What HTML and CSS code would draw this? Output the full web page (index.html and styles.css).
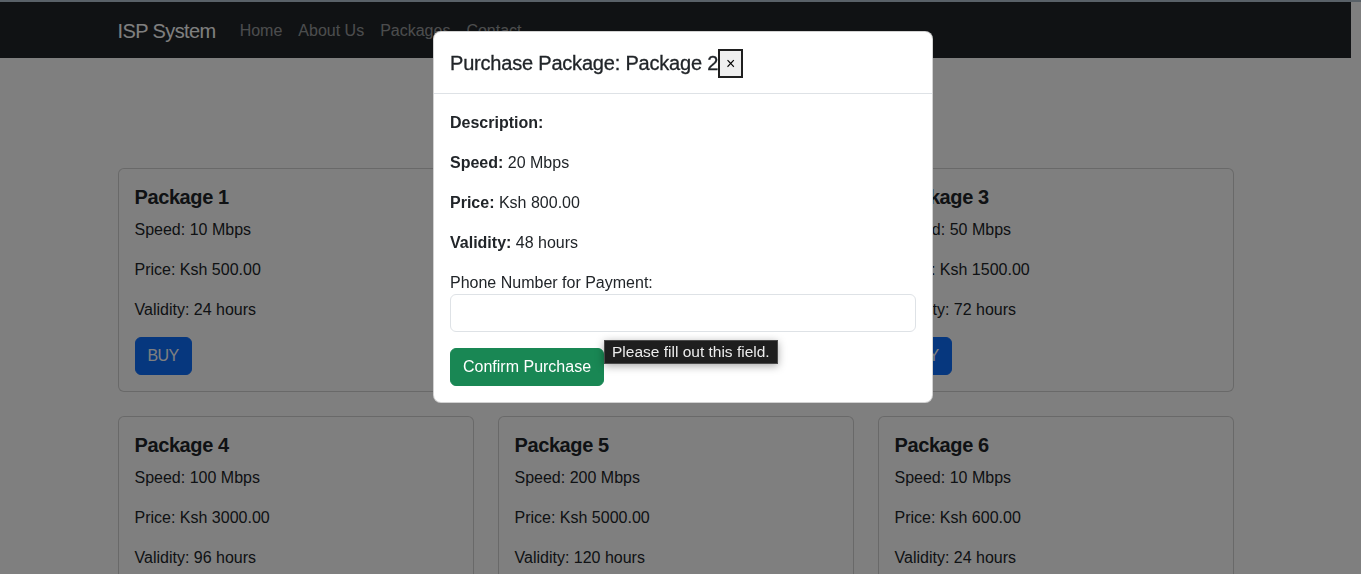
FILE: index.html
```html
<!DOCTYPE html>
<html lang="en">
<head>
<meta charset="utf-8">
<title>ISP System</title>
<link rel="stylesheet" href="styles.css">
</head>
<body>
<div class="topline"></div>
<nav class="navbar">
  <div class="container nav-inner">
    <a class="brand" href="#">ISP System</a>
    <ul class="nav-links">
      <li><a href="#">Home</a></li>
      <li><a href="#">About Us</a></li>
      <li><a href="#">Packages</a></li>
      <li><a href="#">Contact</a></li>
    </ul>
  </div>
</nav>

<main class="container page">
  <div class="grid">
    <div class="card"><h5>Package 1</h5><p>Speed: 10 Mbps</p><p>Price: Ksh 500.00</p><p>Validity: 24 hours</p><button class="btn btn-primary">BUY</button></div>
    <div class="card"><h5>Package 2</h5><p>Speed: 20 Mbps</p><p>Price: Ksh 800.00</p><p>Validity: 48 hours</p><button class="btn btn-primary">BUY</button></div>
    <div class="card"><h5>Package 3</h5><p>Speed: 50 Mbps</p><p>Price: Ksh 1500.00</p><p>Validity: 72 hours</p><button class="btn btn-primary">BUY</button></div>
    <div class="card"><h5>Package 4</h5><p>Speed: 100 Mbps</p><p>Price: Ksh 3000.00</p><p>Validity: 96 hours</p><button class="btn btn-primary">BUY</button></div>
    <div class="card"><h5>Package 5</h5><p>Speed: 200 Mbps</p><p>Price: Ksh 5000.00</p><p>Validity: 120 hours</p><button class="btn btn-primary">BUY</button></div>
    <div class="card"><h5>Package 6</h5><p>Speed: 10 Mbps</p><p>Price: Ksh 600.00</p><p>Validity: 24 hours</p><button class="btn btn-primary">BUY</button></div>
  </div>
</main>

<div class="backdrop"></div>

<div class="modal">
  <div class="dialog">
    <div class="modal-header">
      <h5 class="modal-title">Purchase Package: Package 2</h5>
      <button class="close-btn" type="button">×</button>
    </div>
    <div class="modal-body">
      <p><strong>Description:</strong> </p>
      <p><strong>Speed:</strong> 20 Mbps</p>
      <p><strong>Price:</strong> Ksh 800.00</p>
      <p><strong>Validity:</strong> 48 hours</p>
      <label class="label" for="phone">Phone Number for Payment:</label>
      <div class="field">
        <input id="phone" class="input" type="text">
        <div class="bubble">Please fill out this field.</div>
      </div>
      <button class="btn btn-success" type="button">Confirm Purchase</button>
    </div>
  </div>
</div>
</body>
</html>
```

FILE: styles.css
```css
* { box-sizing: border-box; }

html, body {
  margin: 0;
  height: 100%;
  overflow: hidden;
}

body {
  font-family: "Liberation Sans", Arial, sans-serif;
  font-size: 16px;
  line-height: 1.5;
  color: #212529;
  background: #fff;
  padding-right: 10px;
}

.topline {
  height: 2px;
  background: #b3c2d0;
  margin-right: -10px;
}

.container {
  max-width: 1140px;
  margin: 0 auto;
  padding: 0 12px;
}

.navbar {
  background: #212529;
  padding: 9px 0 7px;
}

.nav-inner {
  display: flex;
  align-items: center;
}

.brand {
  color: #fff;
  font-size: 20px;
  line-height: 30px;
  padding: 5px 0;
  margin-right: 16px;
  text-decoration: none;
  letter-spacing: -0.6px;
}

.nav-links {
  display: flex;
  list-style: none;
  margin: 0;
  padding: 0;
}

.nav-links a {
  display: block;
  padding: 8px;
  color: rgba(255, 255, 255, 0.55);
  text-decoration: none;
}

.page {
  padding-top: 110px;
}

.grid {
  display: grid;
  grid-template-columns: repeat(3, 1fr);
  gap: 24px;
}

.card {
  border: 1px solid rgba(0, 0, 0, 0.175);
  border-radius: 6px;
  padding: 16px;
  background: #fff;
}

.card h5 {
  margin: 0 0 8px;
  font-size: 20px;
  font-weight: 700;
  line-height: 24px;
  letter-spacing: -0.4px;
}

.card p {
  margin: 0 0 16px;
  padding-top: 1px;
  line-height: 23px;
}

.btn {
  display: inline-block;
  font-family: inherit;
  font-size: 16px;
  line-height: 24px;
  padding: 6px 12px;
  border: 1px solid transparent;
  border-radius: 6px;
  color: #fff;
  cursor: pointer;
}

.btn-primary {
  background: #0d6efd;
  border-color: #0d6efd;
  letter-spacing: -0.6px;
}

.btn-success {
  background: #198754;
  border-color: #198754;
}

.backdrop {
  position: fixed;
  inset: 0;
  background: rgba(0, 0, 0, 0.5);
}

.modal {
  position: fixed;
  inset: 0;
  padding-left: 5px;
}

.dialog {
  width: 500px;
  margin: 31px auto 0;
  background: #fff;
  border: 1px solid rgba(0, 0, 0, 0.175);
  border-radius: 8px;
}

.modal-header {
  display: flex;
  align-items: center;
  padding: 16px 16px 15px;
  border-bottom: 1px solid #dee2e6;
}

.modal-title {
  margin: 0;
  font-size: 20px;
  font-weight: 500;
  line-height: 30px;
  letter-spacing: -0.2px;
  -webkit-text-stroke: 0.3px #212529;
}

.close-btn {
  font-family: inherit;
  font-size: 16px;
  line-height: 23px;
  padding: 1px 6px;
  margin: 0;
  background: #efefef;
  color: #000;
  border: 2px solid #1f1f1f;
  border-radius: 0;
}

.modal-body {
  padding: 16px;
}

.modal-body p {
  margin: 0 0 16px;
  padding-top: 1px;
  line-height: 23px;
}

.modal-body strong {
  font-weight: 700;
}

.label {
  display: block;
  padding-top: 1px;
  line-height: 23px;
}

.field {
  position: relative;
  margin-bottom: 16px;
}

.input {
  display: block;
  width: 100%;
  height: 38px;
  padding: 6px 12px;
  font-family: inherit;
  font-size: 16px;
  border: 1px solid #dee2e6;
  border-radius: 6px;
  background: #fff;
}

.bubble {
  position: absolute;
  left: 154px;
  top: 46px;
  padding: 0 7px;
  height: 24px;
  line-height: 22px;
  font-size: 15.5px;
  color: #ececec;
  background: #1e1e1e;
  border: 1px solid #4a4a4a;
  white-space: nowrap;
  box-shadow: 0 2px 8px rgba(0, 0, 0, 0.35);
  z-index: 2;
}
```
